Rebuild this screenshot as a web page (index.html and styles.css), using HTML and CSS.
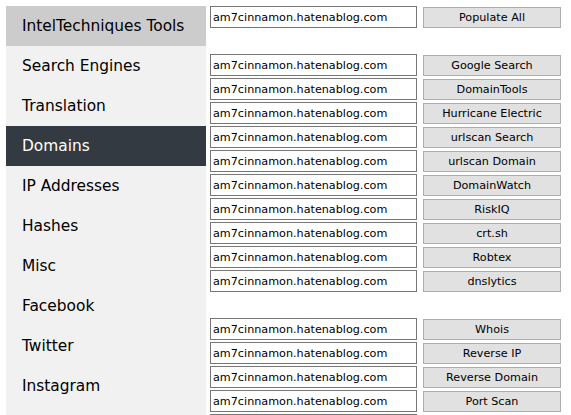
FILE: index.html
```html
<!DOCTYPE html>
<html>
<head>
<meta charset="utf-8">
<link rel="stylesheet" href="styles.css">
</head>
<body>
<div class="page">
  <nav class="sidebar">
    <div class="nav-item nav-head">IntelTechniques Tools</div>
    <div class="nav-item">Search Engines</div>
    <div class="nav-item">Translation</div>
    <div class="nav-item active">Domains</div>
    <div class="nav-item">IP Addresses</div>
    <div class="nav-item">Hashes</div>
    <div class="nav-item">Misc</div>
    <div class="nav-item">Facebook</div>
    <div class="nav-item">Twitter</div>
    <div class="nav-item">Instagram</div>
  </nav>
  <main class="content">
    <div class="row"><input class="field" value="am7cinnamon.hatenablog.com"><button class="btn">Populate All</button></div>
    <div class="spacer"></div>
    <div class="row"><input class="field" value="am7cinnamon.hatenablog.com"><button class="btn">Google Search</button></div>
    <div class="row"><input class="field" value="am7cinnamon.hatenablog.com"><button class="btn">DomainTools</button></div>
    <div class="row"><input class="field" value="am7cinnamon.hatenablog.com"><button class="btn">Hurricane Electric</button></div>
    <div class="row"><input class="field" value="am7cinnamon.hatenablog.com"><button class="btn">urlscan Search</button></div>
    <div class="row"><input class="field" value="am7cinnamon.hatenablog.com"><button class="btn">urlscan Domain</button></div>
    <div class="row"><input class="field" value="am7cinnamon.hatenablog.com"><button class="btn">DomainWatch</button></div>
    <div class="row"><input class="field" value="am7cinnamon.hatenablog.com"><button class="btn">RiskIQ</button></div>
    <div class="row"><input class="field" value="am7cinnamon.hatenablog.com"><button class="btn">crt.sh</button></div>
    <div class="row"><input class="field" value="am7cinnamon.hatenablog.com"><button class="btn">Robtex</button></div>
    <div class="row"><input class="field" value="am7cinnamon.hatenablog.com"><button class="btn">dnslytics</button></div>
    <div class="spacer"></div>
    <div class="row"><input class="field" value="am7cinnamon.hatenablog.com"><button class="btn">Whois</button></div>
    <div class="row"><input class="field" value="am7cinnamon.hatenablog.com"><button class="btn">Reverse IP</button></div>
    <div class="row"><input class="field" value="am7cinnamon.hatenablog.com"><button class="btn">Reverse Domain</button></div>
    <div class="row"><input class="field" value="am7cinnamon.hatenablog.com"><button class="btn">Port Scan</button></div>
    <div class="row"><input class="field" value=""><button class="btn"></button></div>
  </main>
</div>
</body>
</html>
```

FILE: styles.css
```css
html, body {
  margin: 0;
  padding: 0;
  background: #ffffff;
  overflow: hidden;
}
.page {
  display: flex;
  align-items: stretch;
  padding: 6px 0 0 6px;
  height: 415px;
  box-sizing: border-box;
  overflow: hidden;
  font-family: "DejaVu Sans", sans-serif;
}
.sidebar {
  width: 200px;
  flex: 0 0 200px;
  background: #f1f1f1;
  display: flex;
  flex-direction: column;
}
.nav-item {
  flex: 0 0 40px;
  height: 40px;
  display: flex;
  align-items: center;
  padding-left: 16px;
  font-size: 15.4px;
  color: #000000;
}
.nav-head {
  background: #cccccc;
}
.nav-item.active {
  background: #333a41;
  color: #ffffff;
}
.content {
  display: flex;
  flex-direction: column;
  gap: 2px;
  padding-left: 4px;
  overflow: hidden;
}
.row {
  display: flex;
  align-items: flex-start;
  gap: 6px;
  flex: 0 0 22px;
  height: 22px;
}
.spacer {
  flex: 0 0 22px;
  height: 22px;
}
.field {
  width: 207px;
  height: 22px;
  box-sizing: border-box;
  margin: 0;
  border: 1px solid #767676;
  padding: 0 2px;
  font-family: "DejaVu Sans", sans-serif;
  font-size: 11.2px;
  color: #000000;
  background: #ffffff;
}
.btn {
  width: 138px;
  height: 21px;
  margin: 1px 0 0 0;
  box-sizing: border-box;
  border: 1px solid #adadad;
  background: #e1e1e1;
  padding: 0;
  font-family: "DejaVu Sans", sans-serif;
  font-size: 11.2px;
  color: #000000;
}
```
